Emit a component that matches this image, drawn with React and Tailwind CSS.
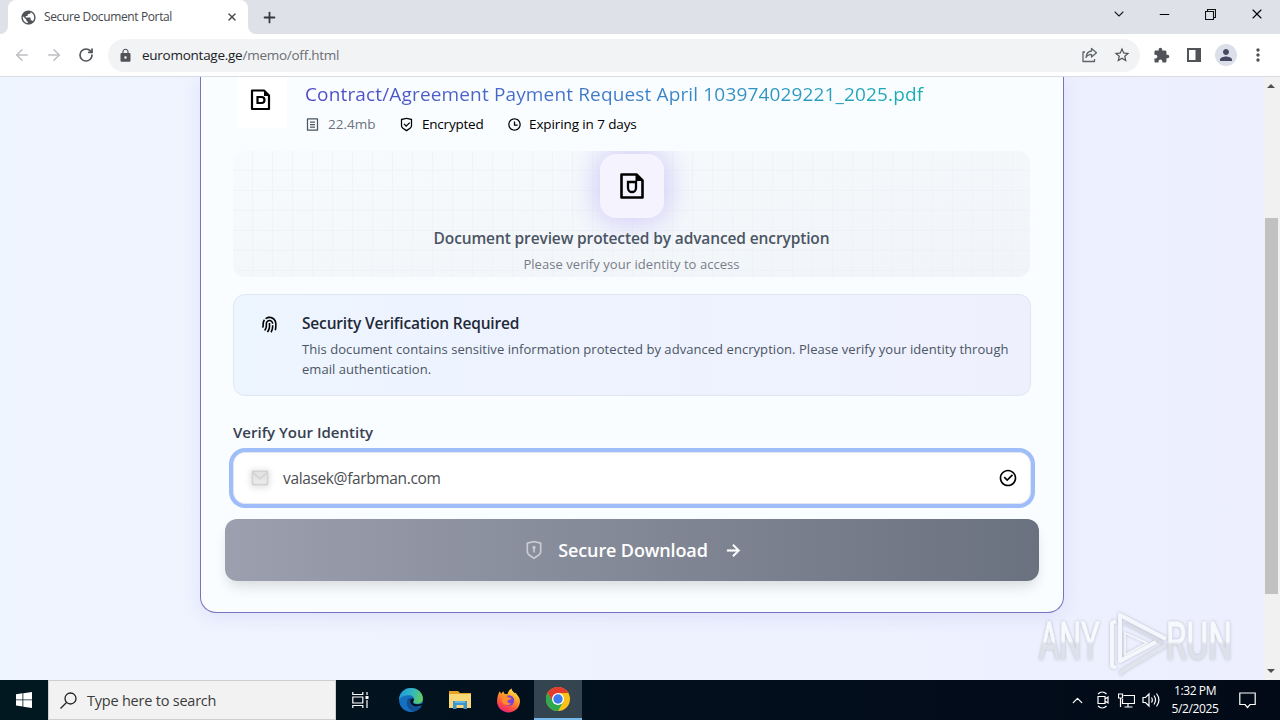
import React from 'react';
import { ArrowLeft, ArrowRight, RotateCw, X, Plus, ChevronDown, ChevronUp, Minus } from 'lucide-react';
import { MdLock, MdPublic, MdStarBorder, MdExtension, MdPerson, MdMoreVert } from 'react-icons/md';
import { RiFingerprintLine, RiMailLine, RiTimeLine, RiFileListLine, RiShieldKeyholeLine, RiCheckboxCircleLine, RiShieldCheckLine, RiArrowRightLine } from 'react-icons/ri';

const RestoreIcon = () => (
    <svg width="11" height="11" viewBox="0 0 11 11" fill="none" stroke="#111" strokeWidth="1.1">
        <path d="M.5 2.5h8v8h-8zM2.5 2.5v-2h8v8h-2" />
    </svg>
);

const ShareIcon = () => (
    <svg width="16" height="16" viewBox="0 0 16 16" fill="none" stroke="#5f6368" strokeWidth="1.3" strokeLinejoin="round">
        <path d="M3 5H1v9.5h11.5V12M9.5 4V1.5l5 4.2-5 4.3V7.3C7 7.3 5.2 8.3 4 10.5 4.3 7 6.2 4.4 9.5 4z" />
    </svg>
);

const SidePanelIcon = () => (
    <svg width="14" height="14" viewBox="0 0 14 14">
        <path d="M0 0h14v14H0zM2 2v10h6.5V2z" fill="#505357" fillRule="evenodd" />
    </svg>
);

const DocIcon = () => (
    <svg width="21" height="22" viewBox="0 0 21 22" fill="none" stroke="#000" strokeWidth="2.2">
        <path d="M2 1.5h12l5 5V20H2z" strokeLinejoin="round" />
        <path d="M14 1v6h6z" fill="#000" stroke="none" />
        <path d="M7.5 8h4a2.8 2.8 0 0 1 0 6h-4z" />
    </svg>
);

const DocShieldIcon = () => (
    <svg width="24" height="26" viewBox="0 0 24 26" fill="none" stroke="#000" strokeWidth="2.6">
        <path d="M1.5 1.5h15l6 6V24.500h-21z" strokeLinejoin="round" />
        <path d="M15.5 1v7H23z" fill="#000" stroke="none" />
        <path d="M8 9h8v6a4 4 0 0 1-8 0z" strokeWidth="2.3" />
    </svg>
);

const EdgeIcon = () => (
    <svg width="26" height="26" viewBox="0 0 24 24">
        <defs>
            <linearGradient id="edgeTop" x1="0" y1="0.3" x2="1" y2="0.5">
                <stop offset="0" stopColor="#2196d8" />
                <stop offset="0.5" stopColor="#30b5c5" />
                <stop offset="1" stopColor="#61cf5c" />
            </linearGradient>
        </defs>
        <circle cx="12" cy="12" r="11" fill="#1470c0" />
        <path d="M1 12C1 5.500 6 1 12 1s11 4.500 11 9.500c0 3-2.500 5-5.500 5-2 0-3.500-.8-3.500-1.800 0-.7 1-1 1-2.500 0-2-1.800-3.700-4.500-3.700C6 7.500 2 9 1 12z" fill="url(#edgeTop)" />
        <path d="M9 11c-3 6 2 12 7 11.300 2.500-.8 4.500-2.300 5.700-4.500-3 1.300-6 1.200-8-.3-2-1.500-2-3.500-1-5 .5-1-2.500-3.500-3.700-1.500z" fill="#134f93" />
        <path d="M11.500 11.500c-.8 2.300.5 4.700 2.500 5.700 2.500 1.300 5.500 1 8.500-.5l.7-2c-1.300.7-3.200 1.300-5.700 1.300-3 0-4-1.300-3.500-2.300.8-1 .8-3-.5-3.500z" fill="#03111c" />
    </svg>
);

const FolderIcon = () => (
    <svg width="22" height="20" viewBox="0 0 22 20">
        <path d="M0 1h9l2 2h11v15H0z" fill="#e8a325" />
        <path d="M0 4h22v14H0z" fill="#fbd877" />
        <path d="M4 11h14v8h-3.500v-4h-7v4H4z" fill="#3d94cf" />
        <path d="M6 11h10v2H6z" fill="#66b6e5" />
    </svg>
);

const FirefoxIcon = () => (
    <svg width="25" height="25" viewBox="0 0 24 24">
        <defs>
            <linearGradient id="fox" x1="0.8" y1="0" x2="0.3" y2="1">
                <stop offset="0" stopColor="#fff04a" />
                <stop offset="0.4" stopColor="#ff9c28" />
                <stop offset="0.75" stopColor="#ff4a45" />
                <stop offset="1" stopColor="#e8207c" />
            </linearGradient>
        </defs>
        <path d="M3.500 3l1.500 2.500L7 3l1 2.500c1 0 2 .2 3 .5C11.500 3.500 13 1.500 15 .5c0 2 1.500 3 3 4.500l1-.5c.5 1 1 2 2 3 1.500 2 2 3.500 2 5.500 0 6-5 10.500-11 10.500S1 19 1 13c0-4 1-7 2.500-10z" fill="url(#fox)" />
        <circle cx="12.5" cy="12" r="5" fill="#7a45d6" />
        <path d="M5 8c2.500-1.500 5-.8 6.500.7L15 10c-1 1.500-3.500 1-4 2.500-.3 1.500 1.500 2.500 3.500 1.800-1.500 3-7 3-8.500-1z" fill="#ff8b2b" />
    </svg>
);

const ChromeIcon = () => (
    <svg width="24" height="24" viewBox="0 0 24 24">
        <circle cx="12" cy="12" r="12" fill="#fbc116" />
        <path d="M12 6h10.400A12 12 0 0 0 1.600 6l5 9z" fill="#e33b2e" />
        <path d="M1.600 6A12 12 0 0 0 12 24l5.200-9-5.200 3-5-3z" fill="#2da94f" />
        <circle cx="12" cy="12" r="6" fill="#fff" />
        <circle cx="12" cy="12" r="4.7" fill="#3b7ded" />
    </svg>
);

const TaskViewIcon = () => (
    <svg width="17" height="16" viewBox="0 0 17 16" fill="none" stroke="#fff" strokeWidth="1.2">
        <path d="M.8 0v2.500h10V0M.8 16v-2.500h10V16M.8 5h10v6H.8zM15 0v3M15 8v8" />
        <path d="M13.500 4h3v3h-3z" fill="#fff" stroke="none" />
    </svg>
);

const Watermark = () => (
    <svg width="210" height="74" viewBox="0 0 210 74" className="absolute left-[1034px] top-[528px] overflow-visible">
        <defs>
            <linearGradient id="wm" x1="0" y1="0" x2="0" y2="1">
                <stop offset="0.5" stopColor="#f8f9fd" />
                <stop offset="0.55" stopColor="#dfe1ea" />
            </linearGradient>
            <filter id="wmShadow" x="-20%" y="-20%" width="140%" height="140%">
                <feDropShadow dx="0" dy="0" stdDeviation="1.5" floodColor="#777b88" floodOpacity="0.5" />
            </filter>
        </defs>
        <g filter="url(#wmShadow)" fill="url(#wm)" stroke="url(#wm)" strokeWidth="0.8" fontFamily="Roboto, 'Liberation Sans', sans-serif" fontSize="51">
            <text transform="translate(5 53.5) scale(0.61 1)">ANY</text>
            <text transform="translate(132 53.5) scale(0.655 1)">RUN</text>
        </g>
        <g filter="url(#wmShadow)" fill="none" stroke="#f6f7fc" strokeWidth="4" strokeLinejoin="round">
            <path d="M82 16l-4 2v43l4 2" />
            <path d="M132 34L86 10v46l36-19" />
            <path d="M90 18l39 20" strokeWidth="2" stroke="#d9dce6" />
            <path d="M91 28v22l22-12z" strokeWidth="1.5" />
            <path d="M132 40L90 65l-4 4" stroke="#e2e4ed" />
        </g>
    </svg>
);

const BrowserChrome = () => (
    <header className="h-[77px] shrink-0 border-b border-[#dadce4]">
        <div className="h-[34px] bg-[#dee1e8] flex">
            <div className="w-2 bg-white">
                <div className="h-full bg-[#dee1e8] rounded-br-lg"></div>
            </div>
            <div className="w-[240px] bg-white rounded-t-lg flex items-center pl-3 pr-2.5">
                <MdPublic size={17} className="text-[#505357]" />
                <span className="ml-[7px] text-[12px] tracking-[-0.37px] text-[#45484d]">Secure Document Portal</span>
                <X size={12} strokeWidth={2.8} className="ml-auto text-[#45484d]" />
            </div>
            <div className="w-2 bg-white">
                <div className="h-full bg-[#dee1e8] rounded-bl-lg"></div>
            </div>
            <div className="flex items-center ml-[5px]">
                <Plus size={17} strokeWidth={2.5} className="text-[#35383d]" />
            </div>
            <div className="ml-auto flex items-center h-[28px]">
                <ChevronDown size={16} strokeWidth={1.6} className="text-[#222] mr-[30px]" />
                <Minus size={15} strokeWidth={1.7} className="mr-[33px]" />
                <RestoreIcon />
                <X size={16} strokeWidth={1.6} className="ml-[33px] mr-[15px]" />
            </div>
        </div>
        <div className="h-[42px] bg-white flex items-center">
            <ArrowLeft size={18} className="ml-[13px] text-[#bcbec2]" />
            <ArrowRight size={18} className="ml-[14px] text-[#bcbec2]" />
            <RotateCw size={16} strokeWidth={2.5} className="ml-[15px] text-[#505357]" />
            <div className="ml-[14px] w-[1032px] h-[33px] rounded-full bg-[#f1f3f5] flex items-center pl-2.5 pr-[9px]">
                <MdLock size={15} className="text-[#505357]" />
                <span className="ml-[9px] text-[13.5px] tracking-[-0.26px] text-[#6b6e73]"><span className="text-[#202124]">euromontage.ge</span>/memo/off.html</span>
                <div className="ml-auto flex items-center gap-[15px]">
                    <ShareIcon />
                    <MdStarBorder size={18} className="text-[#505357]" />
                </div>
            </div>
            <MdExtension size={17} className="ml-[13px] text-[#505357]" />
            <div className="ml-[17px]"><SidePanelIcon /></div>
            <div className="ml-[14px] size-[22px] rounded-full bg-[#dcdfea] flex items-center justify-center">
                <MdPerson size={18} className="text-[#454a62]" />
            </div>
            <MdMoreVert size={20} className="ml-[11px] text-[#505357]" />
        </div>
    </header>
);

const FileHeader = () => (
    <div className="h-[74px] flex">
        <div className="ml-[5px] w-[49px] h-[51px] pr-[5px] pb-1.5 bg-white flex items-center justify-center">
            <DocIcon />
        </div>
        <div className="ml-[18px] pt-[3px]">
            <h1 className="h-7 leading-7 text-[19px] tracking-[0.15px] font-medium whitespace-nowrap w-[620px] bg-clip-text text-transparent bg-gradient-to-r from-[#4f46c5] via-[#3c7bc8] to-[#12aeb5]">
                Contract/Agreement Payment Request April 103974029221_2025.pdf
            </h1>
            <div className="mt-1.5 flex items-center h-5 text-[13.5px] text-black">
                <RiFileListLine size={15} className="text-[#4b5563]" />
                <span className="ml-2 w-[71px] text-[#6b7280]">22.4mb</span>
                <RiShieldCheckLine size={15} />
                <span className="ml-2 w-[85px] tracking-[-0.22px] whitespace-nowrap">Encrypted</span>
                <RiTimeLine size={15} />
                <span className="ml-[7px] tracking-[-0.11px] whitespace-nowrap">Expiring in 7 days</span>
            </div>
        </div>
    </div>
);

const Preview = () => (
    <div className="h-[126px] w-[797px] rounded-xl overflow-hidden bg-gradient-to-br from-[#f8fbfd] to-[#f1f4f8]">
        <div className="h-full pt-[3px] flex flex-col items-center bg-[linear-gradient(90deg,transparent_19px,#e9edf380_19px),linear-gradient(transparent_19px,#e9edf380_19px)] bg-[size:20px_20px]">
            <div className="size-16 rounded-2xl bg-[#f5f4fe] shadow-[0_0_28px_4px_#d0cbf8] flex items-center justify-center">
                <DocShieldIcon />
            </div>
            <p className="mt-2 h-6 leading-6 text-[15.5px] tracking-[-0.12px] font-semibold text-[#4b5563]">Document preview protected by advanced encryption</p>
            <p className="mt-1 h-5 leading-5 text-[13px] tracking-[0.05px] text-[#777d88]">Please verify your identity to access</p>
        </div>
    </div>
);

const SecurityNotice = () => (
    <div className="mt-[17px] h-[102px] rounded-xl border border-[#e0e7f1] bg-gradient-to-r from-[#edf5ff] to-[#eff0fe] flex pl-[26px] pt-[17px]">
        <RiFingerprintLine size={19} className="mt-[3px] text-black shrink-0" />
        <div className="ml-[23px]">
            <h2 className="h-[22px] leading-[22px] text-[15.5px] tracking-[-0.17px] font-semibold text-[#1f2937]">Security Verification Required</h2>
            <p className="mt-[5px] text-[13px] tracking-[0.05px] leading-5 text-[#4b5563] whitespace-nowrap">
                This document contains sensitive information protected by advanced encryption. Please verify your identity through<br />
                email authentication.
            </p>
        </div>
    </div>
);

const VerifyForm = () => (
    <div className="mt-6">
        <label className="block h-6 leading-6 text-[15px] font-semibold text-[#374151]">Verify Your Identity</label>
        <div className="mt-2 h-[52px] rounded-xl bg-white border border-[#e3e7f0] shadow-[0_0_0_4px_#9fbdf8] flex items-center px-3">
            <RiMailLine size={20} className="text-[#d3d3d3] ml-1 drop-shadow-[0_1px_3px_#0000004d]" />
            <span className="ml-[13px] pt-0.5 text-[15.5px] tracking-[-0.36px] text-[#4b4d52]">valasek@farbman.com</span>
            <RiCheckboxCircleLine size={20} className="ml-auto text-black" />
        </div>
        <button className="mt-[15px] -ml-2 w-[814px] h-[62px] rounded-xl bg-gradient-to-r from-[#9ca0ae] to-[#6a717f] shadow-[0_8px_14px_-3px_#00000024] flex items-center justify-center pl-[3px] text-white text-[18px] font-semibold">
            <RiShieldKeyholeLine size={20} className="text-[#c9ccd4]" />
            <span className="ml-3.5 mr-4 pt-px tracking-[-0.13px]">Secure Download</span>
            <RiArrowRightLine size={19} className="stroke-[0.7] stroke-white" />
        </button>
    </div>
);

const Scrollbar = () => (
    <div className="w-[16px] bg-[#f1f1f1] flex flex-col items-center justify-between py-[7px] pr-[2px]">
        <div className="border-x-4 border-x-transparent border-b-4 border-b-[#505050]"></div>
        <div className="w-[13px] h-[376px] mt-[130px] mb-auto bg-[#c1c1c1]"></div>
        <div className="border-x-4 border-x-transparent border-t-4 border-t-[#505050]"></div>
    </div>
);

const Taskbar = () => (
    <footer className="h-10 shrink-0 bg-gradient-to-r from-[#011820] via-[#030f1d] to-[#020a17] flex items-center text-white">
        <div className="w-12 flex justify-center">
            <svg width="16" height="16" viewBox="0 0 16 16" fill="#fff">
                <path d="M0 2.200L6.500 1.300v6.200H0zM7.300 1.200L16 0v7.500H7.300zM0 8.300h6.500v6.200L0 13.600zM7.300 8.300H16V16l-8.700-1.200z" />
            </svg>
        </div>
        <div className="w-72 h-full bg-[#f2f2f2] border border-[#cfcfcf] flex items-center pl-[11px] text-[#3c3c3c]">
            <svg width="17" height="17" viewBox="0 0 17 17" fill="none" stroke="#222" strokeWidth="1.3">
                <circle cx="10.5" cy="6.5" r="5.5" />
                <path d="M6.500 10.500L.5 16.500" />
            </svg>
            <span className="ml-2.5 pt-0.5 text-[14.5px] tracking-[-0.22px]">Type here to search</span>
        </div>
        <div className="w-12 flex justify-center"><TaskViewIcon /></div>
        <div className="w-[54px] flex justify-center"><EdgeIcon /></div>
        <div className="w-11 flex justify-center"><FolderIcon /></div>
        <div className="w-[52px] flex justify-center"><FirefoxIcon /></div>
        <div className="w-12 h-full bg-[#35454f] border-b-2 border-[#76b9ed] flex items-center justify-center"><ChromeIcon /></div>
        <div className="ml-auto flex items-center">
            <ChevronUp size={17} strokeWidth={1.8} />
            <svg width="16" height="18" viewBox="0 0 16 18" fill="none" stroke="#fff" strokeWidth="1.2" className="ml-[9px]">
                <path d="M3 5.500h7v7H3zM10 8l3-2v6l-3-2M3 3c2.500-2.500 6-2.500 8.500 0M3 15c2.500 2.500 6 2.500 8.500 0" />
            </svg>
            <svg width="17" height="15" viewBox="0 0 17 15" fill="none" stroke="#fff" strokeWidth="1.2" className="ml-[7px]">
                <path d="M5.500 2.500h11v8h-12V6M10 10.500v3.500M6.500 14h8M.5 1h4v4h-4zM2.500 5v9" />
            </svg>
            <svg width="18" height="16" viewBox="0 0 18 16" fill="none" stroke="#fff" strokeWidth="1.2" className="ml-[7px]">
                <path d="M1 5.500h2.500L7 2v12L3.500 10.500H1zM9.500 5.500c1 1.500 1 3.500 0 5M12 3.500c2 3 2 6 0 9M14.500 1.500c3 4 3 9 0 13" />
            </svg>
            <div className="ml-2 w-[54px] text-center text-[12px] leading-[18px] tracking-[-0.4px] whitespace-nowrap">
                <div>1:32 PM</div>
                <div>5/2/2025</div>
            </div>
            <svg width="17" height="17" viewBox="0 0 17 17" fill="none" stroke="#fff" strokeWidth="1.2" className="ml-[17px] mr-6">
                <path d="M.8 1h15.400v11.500H11L8.500 15.500 6 12.500H.8z" />
            </svg>
        </div>
    </footer>
);

const App = () => {
    return (
        <div className="w-[1280px] h-[720px] overflow-hidden flex flex-col font-['Open_Sans','Noto_Sans',sans-serif]">
            <BrowserChrome />
            <div className="flex-1 min-h-0 flex">
                <main className="relative w-[1264px] h-full overflow-hidden bg-gradient-to-r from-[#eff5ff] via-[#eef2fe] to-[#edeffe]">
                    <div className="ml-[200px] w-[864px] h-[536px] px-8 bg-[#fafdff] border border-t-0 border-[#7972bd] rounded-b-2xl shadow-[0_4px_18px_#c9c5f266]">
                        <FileHeader />
                        <Preview />
                        <SecurityNotice />
                        <VerifyForm />
                    </div>
                    <Watermark />
                </main>
                <Scrollbar />
            </div>
            <Taskbar />
        </div>
    );
};

export default App;
